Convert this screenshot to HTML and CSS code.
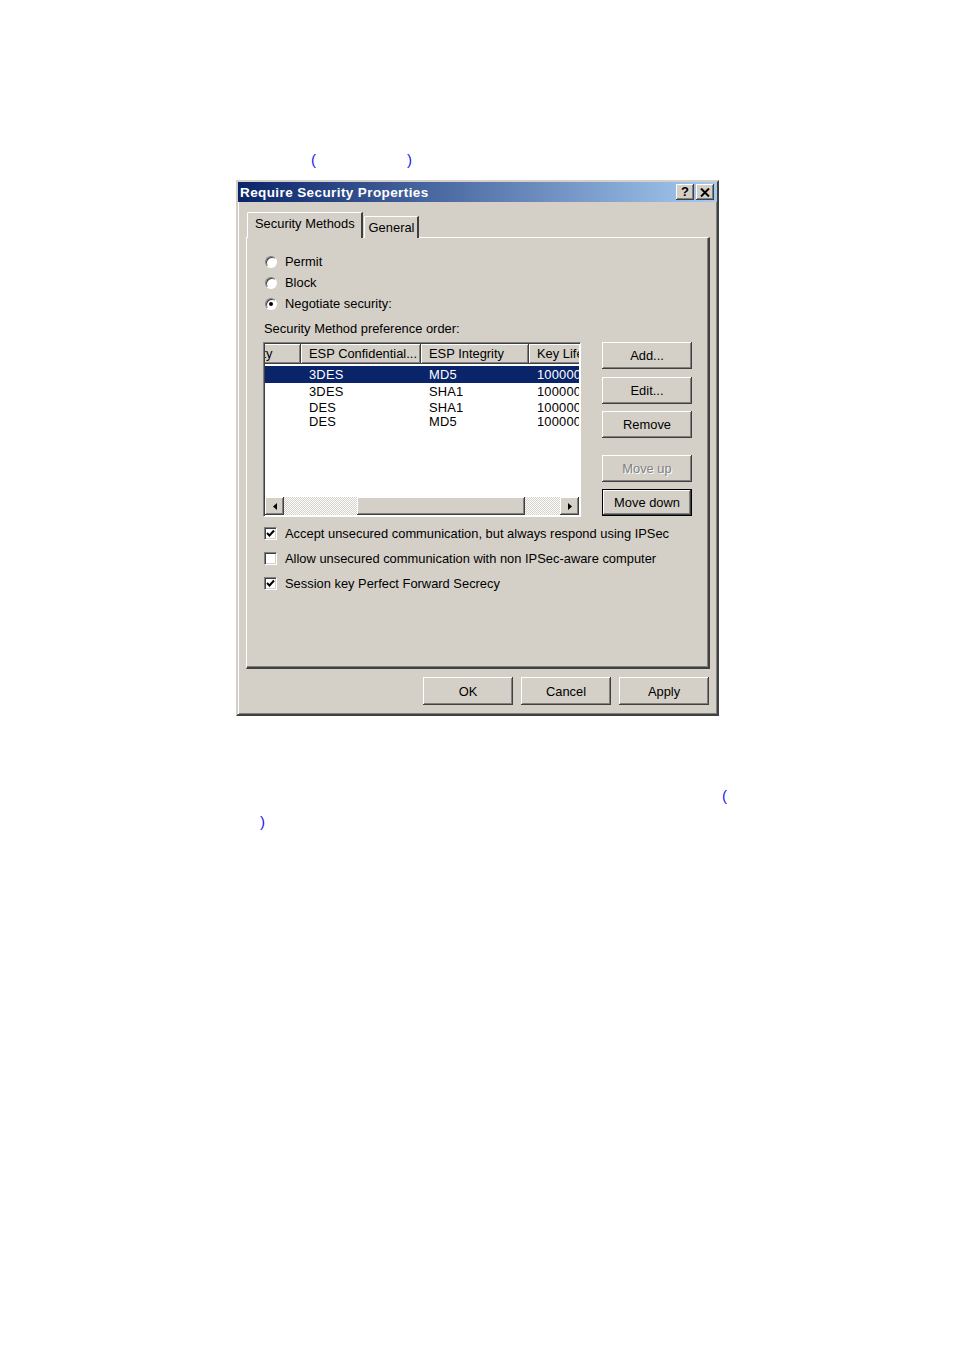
FILE: index.html
```html
<!DOCTYPE html>
<html lang="en">
<head>
    <meta charset="UTF-8">
    <meta name="viewport" content="width=device-width, initial-scale=1.0">
    <title>Require Security Properties</title>
    <link rel="stylesheet" href="styles.css">
</head>
<body>
    <div class="doc">
        <p class="line line-top"><span class="paren">(</span><span class="paren paren-far">)</span></p>

        <div class="dialog">
            <div class="titlebar">
                <span class="title">Require Security Properties</span>
                <span class="cap-btns">
                    <span class="cap-btn cap-help">?</span>
                    <span class="cap-btn">
                        <svg width="10" height="9" viewBox="0 0 10 9"><path d="M1 0.5 L9 8.5 M9 0.5 L1 8.5" stroke="#000" stroke-width="2" fill="none"/></svg>
                    </span>
                </span>
            </div>

            <div class="tabs">
                <span class="tab tab-active">Security Methods</span>
                <span class="tab">General</span>
            </div>

            <div class="panel">
                <div class="radios">
                    <label class="radio"><span class="radio-dot"></span>Permit</label>
                    <label class="radio"><span class="radio-dot"></span>Block</label>
                    <label class="radio"><span class="radio-dot checked"></span>Negotiate security:</label>
                </div>

                <div class="caption">Security Method preference order:</div>

                <div class="methods">
                    <div class="listview">
                        <div class="lv-body">
                            <div class="lv-inner">
                                <div class="lv-head">
                                    <span class="lv-col">Security</span>
                                    <span class="lv-col">ESP Confidential...</span>
                                    <span class="lv-col">ESP Integrity</span>
                                    <span class="lv-col">Key Lifetimes</span>
                                </div>
                                <div class="lv-rows">
                                    <div class="lv-row sel"><span></span><span>3DES</span><span>MD5</span><span>100000</span></div>
                                    <div class="lv-row"><span></span><span>3DES</span><span>SHA1</span><span>100000</span></div>
                                    <div class="lv-row short"><span></span><span>DES</span><span>SHA1</span><span>100000</span></div>
                                    <div class="lv-row shorter"><span></span><span>DES</span><span>MD5</span><span>100000</span></div>
                                </div>
                            </div>
                        </div>
                        <div class="hscroll">
                            <span class="sb-btn">
                                <svg width="4" height="7" viewBox="0 0 4 7"><path d="M4 0 L0 3.5 L4 7 Z" fill="#000"/></svg>
                            </span>
                            <span class="sb-track sb-track-left"></span>
                            <span class="sb-thumb"></span>
                            <span class="sb-track sb-track-right"></span>
                            <span class="sb-btn">
                                <svg width="4" height="7" viewBox="0 0 4 7"><path d="M0 0 L4 3.5 L0 7 Z" fill="#000"/></svg>
                            </span>
                        </div>
                    </div>

                    <div class="side-btns">
                        <button class="btn">Add...</button>
                        <button class="btn btn-edit">Edit...</button>
                        <button class="btn btn-remove">Remove</button>
                        <button class="btn btn-up" disabled>Move up</button>
                        <button class="btn btn-down">Move down</button>
                    </div>
                </div>

                <div class="checks">
                    <label class="check">
                        <span class="check-box">
                            <svg width="9" height="9" viewBox="0 0 9 9"><path d="M1 4 L3.5 6.5 L8 1.5" stroke="#000" stroke-width="2" fill="none"/></svg>
                        </span>Accept unsecured communication, but always respond using IPSec
                    </label>
                    <label class="check">
                        <span class="check-box"></span>Allow unsecured communication with non IPSec-aware computer
                    </label>
                    <label class="check">
                        <span class="check-box">
                            <svg width="9" height="9" viewBox="0 0 9 9"><path d="M1 4 L3.5 6.5 L8 1.5" stroke="#000" stroke-width="2" fill="none"/></svg>
                        </span>Session key Perfect Forward Secrecy
                    </label>
                </div>
            </div>

            <div class="footer-btns">
                <button class="btn">OK</button>
                <button class="btn">Cancel</button>
                <button class="btn">Apply</button>
            </div>
        </div>

        <p class="line line-b1"><span class="paren">(</span></p>
        <p class="line line-b2"><span class="paren">)</span></p>
    </div>
</body>
</html>
```

FILE: styles.css
```css
html,
body {
    margin: 0;
    padding: 0;
    background: #fff;
}
.doc {
    width: 954px;
    height: 1350px;
    font-family: "Liberation Sans", Arial, sans-serif;
}
/* blue brackets left over from the document text */
.line {
    margin: 0;
    height: 20px;
    line-height: 20px;
    font-size: 15px;
    color: #2020f0;
}
.line-top {
    padding-top: 150px;
    padding-left: 311px;
    margin-bottom: 10px;
}
.paren-far {
    margin-left: 91px;
}
.line-b1 {
    margin-top: 70px;
    padding-left: 722px;
}
.line-b2 {
    margin-top: 6px;
    padding-left: 260px;
}

/* dialog window */
.dialog {
    margin-left: 236px;
    width: 483px;
    height: 536px;
    box-sizing: border-box;
    background: #d4d0c8;
    border: 2px solid;
    border-color: #d4d0c8 #404040 #404040 #d4d0c8;
    box-shadow: inset 1px 1px #fff, inset -1px -1px #808080;
    display: flex;
    flex-direction: column;
    font-size: 12.9px;
    color: #000;
}
.titlebar {
    height: 20px;
    display: flex;
    align-items: center;
    justify-content: space-between;
    padding: 0 3px 0 2px;
    background: linear-gradient(to right, #0a246a, #a6caf0);
}
.title {
    color: #fff;
    font-weight: bold;
    font-size: 13.5px;
    letter-spacing: 0.4px;
}
.cap-btns {
    display: flex;
    gap: 2px;
}
.cap-btn {
    width: 18px;
    height: 16px;
    box-sizing: border-box;
    background: #d4d0c8;
    box-shadow: inset -1px -1px #404040, inset 1px 1px #fff, inset -2px -2px #808080;
    display: flex;
    align-items: center;
    justify-content: center;
}
.cap-help {
    font-weight: bold;
    font-size: 13px;
    line-height: 16px;
}

/* tabs */
.tabs {
    margin: 11px 0 0 9px;
    height: 25px;
    display: flex;
    align-items: flex-end;
    position: relative;
    z-index: 1;
}
.tab {
    height: 22px;
    line-height: 21px;
    padding: 0 3px 0 4px;
    box-sizing: border-box;
    border-top: 1px solid #fff;
    border-left: 1px solid #fff;
    border-right: 2px solid #404040;
    border-top-left-radius: 2px;
    background: #d4d0c8;
}
.tab-active {
    height: 26px;
    line-height: 22px;
    padding: 0 6px 0 7px;
    margin-right: 1px;
}

/* tab page */
.panel {
    margin: -1px 0 0 8px;
    width: 464px;
    height: 432px;
    box-sizing: border-box;
    border: 1px solid #fff;
    border-right: 2px solid #404040;
    border-bottom: 2px solid #404040;
    box-shadow: inset -1px -1px #808080;
    padding: 13px 0 0 16px;
}
.radios {
    margin-left: 2px;
}
.radio {
    height: 21px;
    display: flex;
    align-items: center;
    gap: 8px;
}
.radio-dot {
    width: 12px;
    height: 12px;
    box-sizing: border-box;
    border-radius: 50%;
    background: #fff;
    border: 1px solid;
    border-color: #808080 #fff #fff #808080;
    box-shadow: inset 1px 1px #404040;
    position: relative;
}
.radio-dot.checked::after {
    content: "";
    position: absolute;
    left: 3px;
    top: 3px;
    width: 4px;
    height: 4px;
    border-radius: 50%;
    background: #000;
}
.caption {
    margin: 6px 0 0 1px;
    height: 18px;
    line-height: 18px;
}

/* method list + side buttons */
.methods {
    margin-top: 4px;
    display: flex;
    gap: 21px;
}
.listview {
    width: 318px;
    height: 175px;
    box-sizing: border-box;
    background: #fff;
    border: 1px solid;
    border-color: #808080 #fff #fff #808080;
    box-shadow: inset 1px 1px #404040;
    padding: 1px;
    display: flex;
    flex-direction: column;
}
.lv-body {
    flex: 1;
    overflow: hidden;
}
.lv-inner {
    margin-left: -47px;
}
.lv-head,
.lv-row {
    display: grid;
    grid-template-columns: 83px 120px 108px 90px;
    white-space: nowrap;
}
.lv-col {
    height: 20px;
    line-height: 20px;
    padding-left: 8px;
    background: #d4d0c8;
    box-shadow: inset -1px -1px #404040, inset 1px 1px #fff, inset -2px -2px #808080;
    overflow: hidden;
}
.lv-rows {
    padding-top: 2px;
}
.lv-row {
    height: 17px;
    line-height: 17px;
    letter-spacing: 0.2px;
}
.lv-row span {
    padding-left: 8px;
    overflow: hidden;
}
.lv-row.short {
    height: 15px;
    line-height: 15px;
}
.lv-row.shorter {
    height: 13px;
    line-height: 13px;
}
.lv-row.sel {
    background: #0a246a;
    color: #fff;
}
.hscroll {
    height: 18px;
    display: flex;
}
.sb-btn {
    width: 19px;
    box-sizing: border-box;
    background: #d4d0c8;
    box-shadow: inset -1px -1px #404040, inset 1px 1px #fff, inset -2px -2px #808080;
    display: flex;
    align-items: center;
    justify-content: center;
}
.sb-track {
    background: repeating-conic-gradient(#fff 0 25%, #d4d0c8 0 50%) 0 0 / 2px 2px;
}
.sb-track-left {
    width: 73px;
}
.sb-track-right {
    flex: 1;
}
.sb-thumb {
    width: 168px;
    background: #d4d0c8;
    box-shadow: inset -1px -1px #404040, inset 1px 1px #fff, inset -2px -2px #808080;
}

/* push buttons */
.btn {
    width: 90px;
    height: 27px;
    padding: 0;
    font-family: "Liberation Sans", Arial, sans-serif;
    font-size: 12.9px;
    color: #000;
    background: #d4d0c8;
    border: none;
    border-radius: 0;
    box-shadow: inset -1px -1px #404040, inset 1px 1px #fff, inset -2px -2px #808080;
}
.btn[disabled] {
    color: #808080;
    text-shadow: 1px 1px #fff;
}
.side-btns {
    display: flex;
    flex-direction: column;
}
.btn-edit {
    margin-top: 8px;
}
.btn-remove {
    margin-top: 7px;
}
.btn-up {
    margin-top: 17px;
}
.btn-down {
    margin-top: 7px;
    border: 1px solid #000;
}

/* checkboxes */
.checks {
    margin-top: 4px;
    margin-left: 1px;
}
.check {
    height: 25px;
    display: flex;
    align-items: center;
    gap: 8px;
}
.check-box {
    width: 13px;
    height: 13px;
    box-sizing: border-box;
    background: #fff;
    border: 1px solid;
    border-color: #808080 #fff #fff #808080;
    box-shadow: inset 1px 1px #404040, inset -1px -1px #d4d0c8;
    display: flex;
    align-items: center;
    justify-content: center;
}

/* bottom row */
.footer-btns {
    margin: 8px 8px 0 0;
    display: flex;
    justify-content: flex-end;
    gap: 8px;
}
.footer-btns .btn {
    height: 28px;
}
```
